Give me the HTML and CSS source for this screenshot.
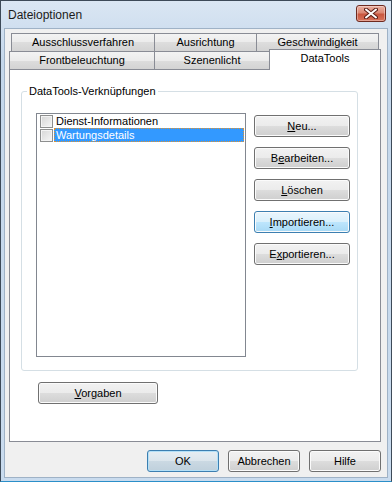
FILE: index.html
```html
<!DOCTYPE html>
<html lang="de">
<head>
  <meta charset="UTF-8" />
  <title>Dateioptionen</title>
  <link rel="stylesheet" href="styles.css">
</head>
<body>
  <div class="window">
    <!-- Title bar -->
    <div class="titlebar">
      <span class="title">Dateioptionen</span>
      <button class="close" title="Schließen">
        <svg width="14" height="11" viewBox="0 0 14 11">
          <path d="M2 1.5 L12 9.5 M12 1.5 L2 9.5" stroke="#5a1e16" stroke-width="4" stroke-linecap="round"/>
          <path d="M2 1.5 L12 9.5 M12 1.5 L2 9.5" stroke="#ffffff" stroke-width="2" stroke-linecap="round"/>
        </svg>
      </button>
    </div>

    <div class="client">
      <!-- Tab headers, two rows -->
      <div class="tabs">
        <div class="tabrow back">
          <div class="tab" style="width:144px">Ausschlussverfahren</div>
          <div class="tab" style="width:103px">Ausrichtung</div>
          <div class="tab" style="width:123px">Geschwindigkeit</div>
        </div>
        <div class="tabrow front">
          <div class="tab" style="width:146px">Frontbeleuchtung</div>
          <div class="tab" style="width:116px">Szenenlicht</div>
          <div class="tab active" style="width:112px">DataTools</div>
        </div>
      </div>

      <div class="tabpage">
        <div class="group">
          <span class="group-label">DataTools-Verknüpfungen</span>
          <div class="group-body">
            <div class="listbox">
              <div class="item">
                <span class="check"></span>
                <span class="item-text">Dienst-Informationen</span>
              </div>
              <div class="item selected">
                <span class="check"></span>
                <span class="item-text">Wartungsdetails</span>
              </div>
            </div>
            <div class="side-buttons">
              <button class="btn"><u>N</u>eu...</button>
              <button class="btn">B<u>e</u>arbeiten...</button>
              <button class="btn"><u>L</u>öschen</button>
              <button class="btn hover"><u>I</u>mportieren...</button>
              <button class="btn">E<u>x</u>portieren...</button>
            </div>
          </div>
        </div>
        <button class="btn defaults"><u>V</u>orgaben</button>
      </div>

      <!-- Dialog buttons -->
      <div class="footer">
        <button class="btn small default">OK</button>
        <button class="btn small">Abbrechen</button>
        <button class="btn small">Hilfe</button>
      </div>
    </div>
  </div>
</body>
</html>
```

FILE: styles.css
```css
* {
  box-sizing: border-box;
}

body {
  margin: 0;
  background-color: #ffffff;
  font-family: 'Liberation Sans', Arial, sans-serif;
  font-size: 11px;
  color: #000;
}

.window {
  width: 392px;
  height: 482px;
  border: 1px solid #3d4a58;
  border-bottom-color: #2b8fc9;
  padding: 0 3px 3px 3px;
  background: linear-gradient(#dae6f3, #c4d7eb 60px, #c9dbee);
  display: flex;
  flex-direction: column;
}

.titlebar {
  height: 27px;
  display: flex;
  align-items: flex-start;
  justify-content: space-between;
  padding: 0 2px 0 4px;
}

.title {
  font-size: 12px;
  color: #1b1b1b;
  margin-top: 7px;
}

.close {
  width: 30px;
  height: 17px;
  margin-top: 4px;
  padding: 0;
  border: 1px solid #6e2a20;
  border-radius: 3px;
  background: linear-gradient(#eab0a1, #dc8874 45%, #c9573f 55%, #d8735b);
  box-shadow: inset 0 0 0 1px rgba(255, 255, 255, 0.35);
  display: flex;
  align-items: center;
  justify-content: center;
}

.client {
  flex: 1;
  background-color: #f0f0f0;
  border: 1px solid #9fb2c6;
  display: flex;
  flex-direction: column;
}

.tabs {
  padding-top: 4px;
}

.tabrow {
  display: flex;
  align-items: flex-start;
}

.tabrow.back {
  margin-left: 6px;
}

.tabrow.front {
  margin-left: 4px;
  margin-top: -1px;
}

.tab {
  height: 19px;
  border: 1px solid #898c95;
  margin-left: -1px;
  background: linear-gradient(#f3f3f3, #ebebeb 50%, #dddddd 50%, #d3d3d3);
  text-align: center;
  line-height: 17px;
  color: #000;
}

.tab:first-child {
  margin-left: 0;
}

.tab.active {
  position: relative;
  z-index: 1;
  height: 21px;
  margin-top: -2px;
  border-bottom: none;
  background: #ffffff;
  line-height: 16px;
}

.tabpage {
  margin: -1px 0 0 4px;
  width: 372px;
  height: 373px;
  border: 1px solid #898c95;
  background-color: #ffffff;
}

.group {
  margin: 21px 0 0 11px;
  width: 337px;
  height: 280px;
  border: 1px solid #d5dfe5;
  border-radius: 3px;
  display: flex;
  flex-direction: column;
}

.group-label {
  align-self: flex-start;
  margin: -7px 0 0 5px;
  padding: 0 2px;
  height: 13px;
  line-height: 13px;
  background-color: #ffffff;
}

.group-body {
  display: flex;
  align-items: flex-start;
  gap: 8px;
  margin: 15px 0 0 14px;
}

.listbox {
  width: 210px;
  height: 244px;
  border: 1px solid #828790;
  background-color: #ffffff;
  padding-left: 3px;
  padding-right: 1px;
}

.item {
  display: flex;
  align-items: center;
  height: 14px;
}

.check {
  width: 13px;
  height: 13px;
  border: 1px solid #8e8f8f;
  background: linear-gradient(135deg, #d6d6d6, #f6f6f6);
  box-shadow: inset 0 0 0 1px #f4f4f4;
  margin-right: 1px;
}

.item-text {
  flex: 1;
  height: 14px;
  line-height: 12px;
  padding-left: 1px;
  border: 1px solid transparent;
}

.item.selected .item-text {
  background-color: #3399ff;
  color: #ffffff;
  border: 1px dotted #e0922e;
}

.side-buttons {
  display: flex;
  flex-direction: column;
  gap: 10px;
  padding-top: 2px;
}

.btn {
  width: 96px;
  height: 22px;
  padding: 0;
  border: 1px solid #707070;
  border-radius: 3px;
  background: linear-gradient(#f2f2f2, #ebebeb 50%, #dddddd 50%, #cfcfcf);
  box-shadow: inset 0 0 0 1px #fbfbfb;
  font-family: 'Liberation Sans', Arial, sans-serif;
  font-size: 11px;
  color: #000;
  text-align: center;
}

.btn.hover {
  border-color: #3c7fb1;
  background: linear-gradient(#eaf6fd, #d9f0fc 50%, #bee6fd 50%, #a7d9f5);
}

.btn.defaults {
  width: 120px;
  margin: 11px 0 0 28px;
}

.footer {
  display: flex;
  justify-content: flex-end;
  gap: 9px;
  margin-top: 8px;
  padding-right: 6px;
}

.btn.small {
  width: 72px;
}

.btn.default {
  border-color: #3c7fb1;
  background: linear-gradient(#e6eef3, #dbe5ec 50%, #cbd9e3 50%, #bfd0dc);
  box-shadow: inset 0 0 0 1px #b4e0f7;
}
```
